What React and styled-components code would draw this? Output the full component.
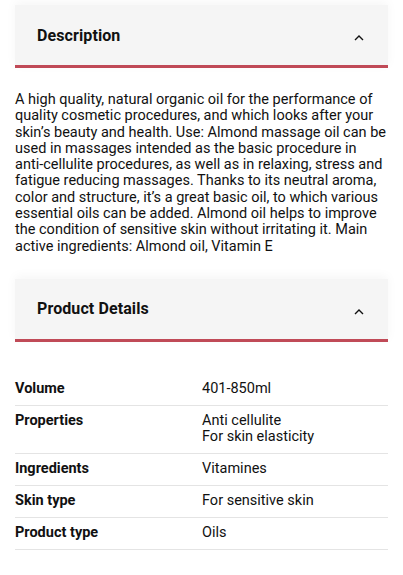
import React from "react";
import styled, { createGlobalStyle } from "styled-components";

const GlobalStyle = createGlobalStyle`
  html, body {
    margin: 0;
    padding: 0;
    background: #ffffff;
  }
  body {
    font-family: Roboto, "Noto Sans", Arial, sans-serif;
    color: #111111;
  }
`;

const Page = styled.div`
  width: 403px;
  padding: 5px 15px 20px;
  box-sizing: border-box;
`;

const Section = styled.section`
  display: flex;
  flex-direction: column;
`;

const Header = styled.div`
  display: flex;
  align-items: center;
  justify-content: space-between;
  height: 60px;
  padding: 0 22px;
  background: #f5f5f5;
  border-bottom: 3px solid #c04a57;
  box-shadow: 0 -3px 10px rgba(0, 0, 0, 0.04);
`;

const Title = styled.h2`
  margin: 0;
  font-size: 16px;
  font-weight: 700;
  color: #111111;
  letter-spacing: 0.1px;
`;

const Chevron = styled.svg`
  width: 10px;
  height: 6px;
  margin-top: 6px;
  margin-right: 2px;
`;

const Body = styled.p`
  margin: 24px 0 24px;
  font-size: 14.5px;
  line-height: 16.3px;
  color: #111111;
`;

const Line = styled.span`
  display: block;
  white-space: nowrap;
`;

const Table = styled.div`
  display: flex;
  flex-direction: column;
  margin-top: 32px;
`;

const Row = styled.div`
  display: grid;
  grid-template-columns: 187px 1fr;
  padding: 7.5px 0;
  border-bottom: 1px solid #e4e4e4;
  font-size: 14.5px;
  line-height: 16px;
`;

const Label = styled.div`
  font-weight: 700;
  color: #111111;
`;

const Value = styled.div`
  display: flex;
  flex-direction: column;
  color: #111111;
`;

const ChevronUp = () => (
  <Chevron viewBox="0 0 10 6">
    <path d="M1 5 L5 1 L9 5" fill="none" stroke="#111" strokeWidth="1.4" />
  </Chevron>
);

const description = [
  "A high quality, natural organic oil for the performance of",
  "quality cosmetic procedures, and which looks after your",
  "skin’s beauty and health. Use: Almond massage oil can be",
  "used in massages intended as the basic procedure in",
  "anti-cellulite procedures, as well as in relaxing, stress and",
  "fatigue reducing massages. Thanks to its neutral aroma,",
  "color and structure, it’s a great basic oil, to which various",
  "essential oils can be added. Almond oil helps to improve",
  "the condition of sensitive skin without irritating it. Main",
  "active ingredients: Almond oil, Vitamin E",
];

const details = [
  ["Volume", ["401-850ml"]],
  ["Properties", ["Anti cellulite", "For skin elasticity"]],
  ["Ingredients", ["Vitamines"]],
  ["Skin type", ["For sensitive skin"]],
  ["Product type", ["Oils"]],
];

export default function App() {
  return (
    <>
      <GlobalStyle />
      <Page>
        <Section>
          <Header>
            <Title>Description</Title>
            <ChevronUp />
          </Header>
          <Body>
            {description.map((l) => (
              <Line key={l}>{l}</Line>
            ))}
          </Body>
        </Section>
        <Section>
          <Header>
            <Title>Product Details</Title>
            <ChevronUp />
          </Header>
          <Table>
            {details.map(([label, values]) => (
              <Row key={label}>
                <Label>{label}</Label>
                <Value>
                  {values.map((v) => (
                    <span key={v}>{v}</span>
                  ))}
                </Value>
              </Row>
            ))}
          </Table>
        </Section>
      </Page>
    </>
  );
}
